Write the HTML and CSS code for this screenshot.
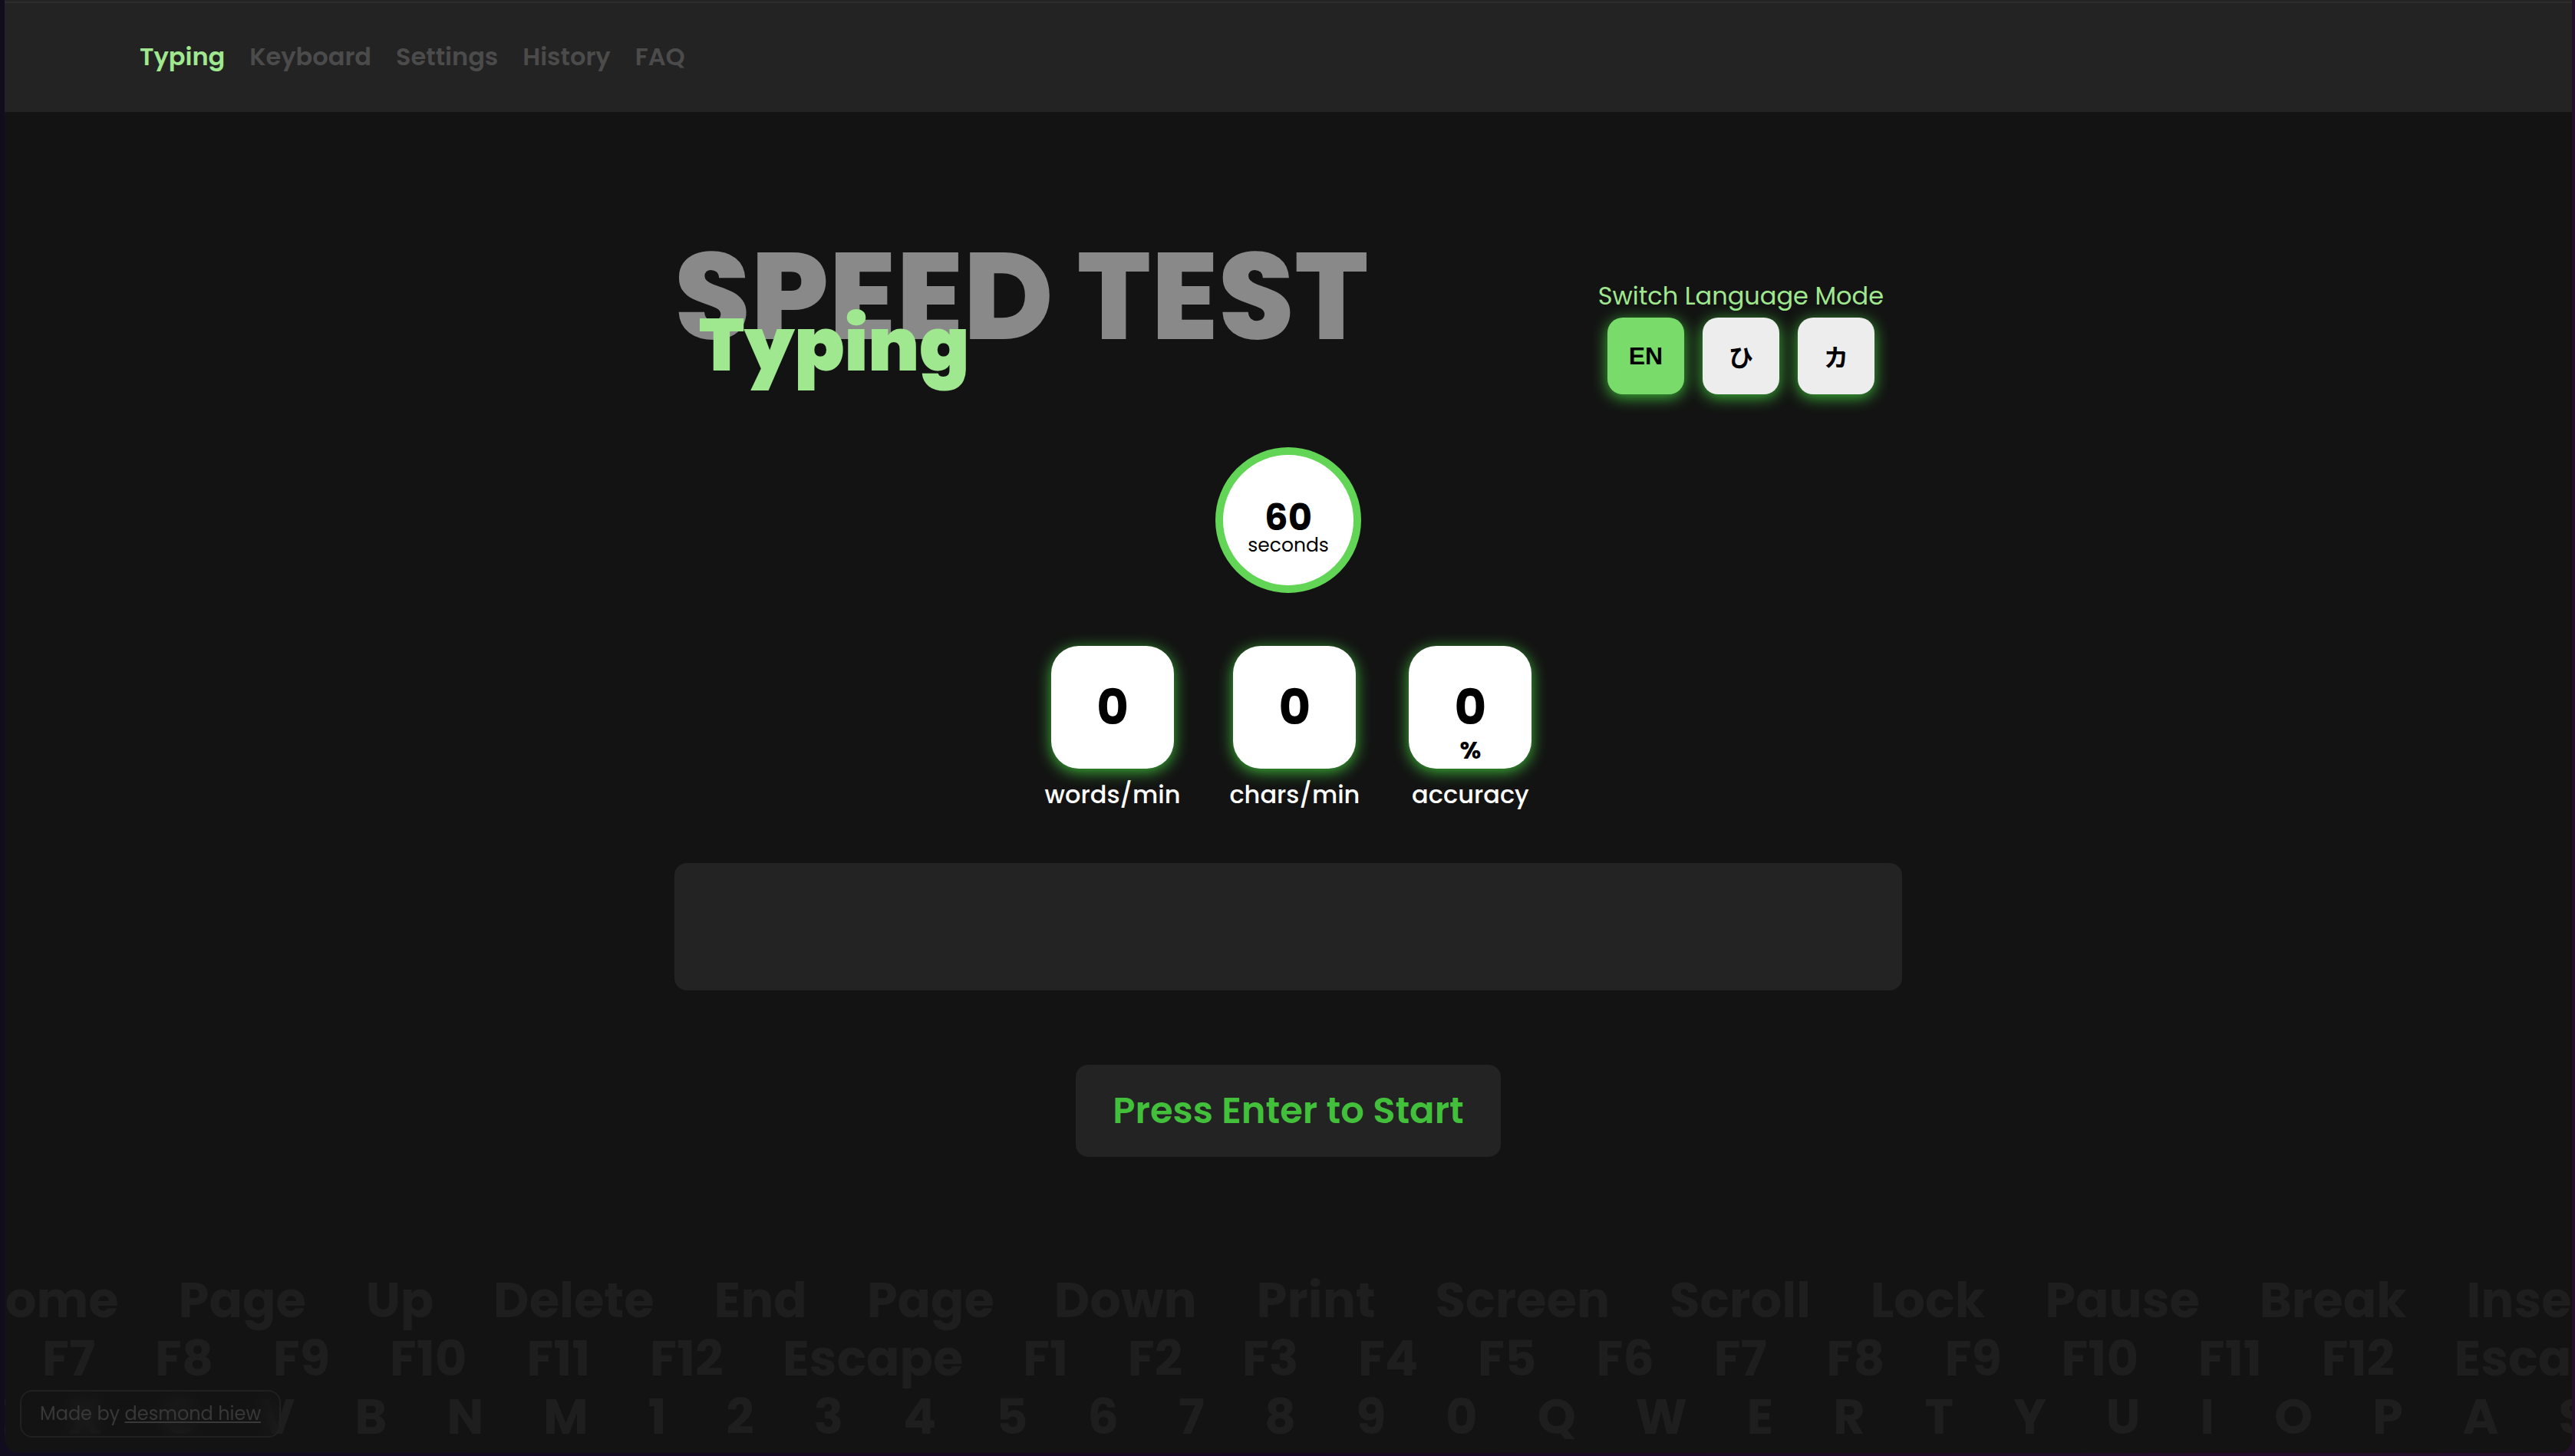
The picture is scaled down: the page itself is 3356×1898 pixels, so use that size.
FILE: index.html
```html
<!DOCTYPE html>
<html lang="en">
<head>
<meta charset="utf-8">
<title>Typing Speed Test</title>
<link rel="stylesheet" href="styles.css">
</head>
<body>
<div class="window">
  <header class="topbar">
    <nav class="nav">
      <a class="nav-link active" href="#typing">Typing</a>
      <a class="nav-link" href="#keyboard">Keyboard</a>
      <a class="nav-link" href="#settings">Settings</a>
      <a class="nav-link" href="#history">History</a>
      <a class="nav-link" href="#faq">FAQ</a>
    </nav>
  </header>

  <main class="main">
    <div class="heading">
      <h1 class="title">SPEED TEST<span class="subtitle">Typing</span></h1>
      <section class="language">
        <p class="language-label" id="language-label">Switch Language Mode</p>
        <div class="language-keys" role="group" aria-labelledby="language-label">
          <button class="key selected" type="button">EN</button>
          <button class="key" type="button" lang="ja">ひ</button>
          <button class="key" type="button" lang="ja">カ</button>
        </div>
      </section>
    </div>

    <div class="timer"><strong class="timer-value">60</strong><span class="timer-unit">seconds</span></div>

    <dl class="stats">
      <div class="stat"><dd class="tile">0</dd><dt class="stat-label">words/min</dt></div>
      <div class="stat"><dd class="tile">0</dd><dt class="stat-label">chars/min</dt></div>
      <div class="stat"><dd class="tile">0<span class="percent">%</span></dd><dt class="stat-label">accuracy</dt></div>
    </dl>

    <input class="typing-box" type="text" aria-label="Typing area">
    <button class="start" type="button">Press Enter to Start</button>
  </main>

  <div class="marquee" aria-hidden="true">
    <div class="row row-nav"><span>Home</span><span>Page</span><span>Up</span><span>Delete</span><span>End</span><span>Page</span><span>Down</span><span>Print</span><span>Screen</span><span>Scroll</span><span>Lock</span><span>Pause</span><span>Break</span><span>Insert</span></div>
    <div class="row row-function"><span>F7</span><span>F8</span><span>F9</span><span>F10</span><span>F11</span><span>F12</span><span>Escape</span><span>F1</span><span>F2</span><span>F3</span><span>F4</span><span>F5</span><span>F6</span><span>F7</span><span>F8</span><span>F9</span><span>F10</span><span>F11</span><span>F12</span><span>Escape</span></div>
    <div class="row row-letters"><span>Z</span><span>X</span><span>C</span><span>V</span><span>B</span><span>N</span><span>M</span><span>1</span><span>2</span><span>3</span><span>4</span><span>5</span><span>6</span><span>7</span><span>8</span><span>9</span><span>0</span><span>Q</span><span>W</span><span>E</span><span>R</span><span>T</span><span>Y</span><span>U</span><span>I</span><span>O</span><span>P</span><span>A</span><span>S</span></div>
  </div>

  <footer class="credit">Made by <a class="credit-link" href="#author">desmond hiew</a></footer>
</div>
</body>
</html>
```
FILE: styles.css
```css
* { box-sizing: border-box; }

body {
  margin: 0;
  padding: 0 4px 4px 6px;
  background: linear-gradient(90deg, #110c1e, #160820 50%, #250f2c);
  font-family: Poppins, Inter, "Noto Sans CJK JP", sans-serif;
  color: #fff;
}

h1, p, dl, dd { margin: 0; }

.window {
  position: relative;
  display: flex;
  flex-direction: column;
  min-height: calc(100vh - 4px);
  overflow: hidden;
  border-radius: 0 0 18px 18px;
  background: #131313;
}

.topbar {
  display: flex;
  align-items: center;
  height: 146px;
  padding: 2px 176px 0;
  background: linear-gradient(#232323 2px, #2d2d2d 2px, #2d2d2d 4px, #232323 4px);
}

.nav { display: flex; gap: 32px; }

.nav-link {
  font-size: 32px;
  line-height: 48px;
  font-weight: 600;
  color: #4b4b4b;
  text-decoration: none;
}

.nav-link.active { color: #a0e88f; }

.main {
  display: flex;
  flex-direction: column;
  align-items: center;
  width: 1600px;
  max-width: 100%;
  margin: 0 auto;
  padding-top: 144px;
}

.heading {
  display: flex;
  justify-content: space-between;
  width: 100%;
}

.title {
  position: relative;
  font-size: 160px;
  line-height: 192px;
  font-weight: 800;
  color: #898989;
  white-space: nowrap;
}

.subtitle {
  position: absolute;
  left: 32px;
  top: 100px;
  font-size: 96px;
  line-height: 120px;
  font-weight: 900;
  color: #a0e88f;
}

.language {
  display: flex;
  flex-direction: column;
  align-items: center;
  padding: 72px 24px 0 0;
}

.language-label {
  font-size: 32px;
  line-height: 48px;
  color: #a0e88f;
}

.language-keys { display: flex; gap: 24px; padding-top: 4px; }

.key {
  width: 100px;
  height: 100px;
  padding: 0;
  border: 0;
  border-radius: 20px;
  background: #ededed;
  box-shadow: 0 4px 20px #3fb93a;
  color: #000;
  font: 700 32px "Liberation Sans", "Noto Sans CJK JP", sans-serif;
}

.key.selected { background: #79db69; }

.timer {
  display: flex;
  flex-direction: column;
  align-items: center;
  justify-content: center;
  width: 190px;
  height: 190px;
  margin-top: 69px;
  padding-top: 22px;
  border: 10px solid #62d556;
  border-radius: 50%;
  background: #fff;
  color: #000;
}

.timer-value { font-size: 48px; line-height: 44px; }
.timer-unit { font-size: 25px; line-height: 28px; }

.stats { display: flex; gap: 64px; margin-top: 69px; }

.stat { display: flex; flex-direction: column; align-items: center; }

.tile {
  position: relative;
  width: 160px;
  height: 160px;
  border-radius: 36px;
  background: #fff;
  box-shadow: 0 4px 20px #3fb93a;
  color: #000;
  font-size: 64px;
  line-height: 160px;
  font-weight: 700;
  text-align: center;
}

.percent {
  position: absolute;
  left: 0;
  right: 0;
  bottom: 4px;
  font-size: 32px;
  line-height: 40px;
}

.stat-label {
  padding-top: 10px;
  font-size: 32px;
  line-height: 48px;
  font-weight: 500;
}

.typing-box {
  width: 100%;
  height: 166px;
  margin-top: 65px;
  padding: 32px;
  border: 0;
  border-radius: 16px;
  background: #232323;
  color: #fff;
  font: inherit;
  font-size: 48px;
}

.start {
  height: 120px;
  margin-top: 97px;
  padding: 0 48px;
  border: 0;
  border-radius: 16px;
  background: #232323;
  color: #42bf3b;
  font: inherit;
  font-size: 48px;
  font-weight: 600;
}

.marquee {
  margin-top: auto;
  padding-bottom: 9px;
  font-size: 64px;
  line-height: 76px;
  font-weight: 700;
  color: #1e1e1e;
}

.row { display: flex; justify-content: space-between; }
.row-nav { margin: 0 -53px 0 -46px; }
.row-function { margin: 0 -82px 0 49px; }
.row-letters { margin: 0 -22px 0 -34px; }

.credit {
  position: absolute;
  left: 20px;
  bottom: 20px;
  padding: 0 24px;
  border: 2px solid #202020;
  border-radius: 16px;
  backdrop-filter: blur(12px);
  font-size: 24px;
  line-height: 58px;
  color: #383838;
}

.credit-link {
  color: inherit;
  text-decoration-thickness: 2px;
  text-underline-offset: 2px;
}
```
